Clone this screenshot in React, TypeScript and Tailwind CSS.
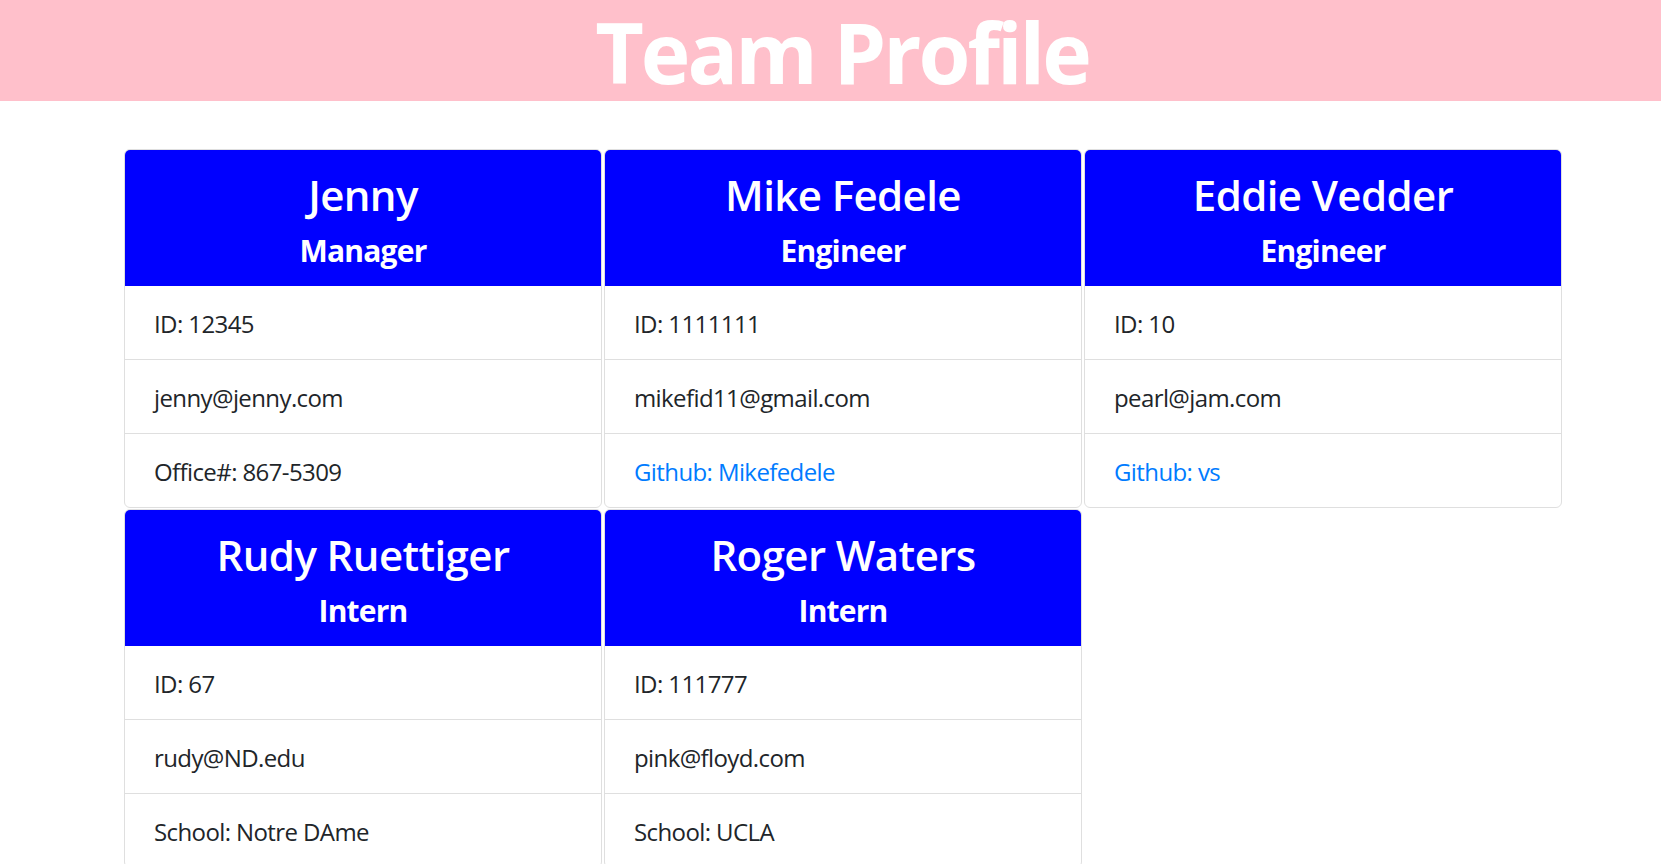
import React from "react";

interface Member {
  id: string;
  name: string;
  role: string;
  email: string;
  extra: string;
  link?: boolean;
}

const team: Member[] = [
  { id: "12345", name: "Jenny", role: "Manager", email: "jenny@jenny.com", extra: "Office#: 867-5309" },
  { id: "1111111", name: "Mike Fedele", role: "Engineer", email: "mikefid11@gmail.com", extra: "Github: Mikefedele", link: true },
  { id: "10", name: "Eddie Vedder", role: "Engineer", email: "pearl@jam.com", extra: "Github: vs", link: true },
  { id: "67", name: "Rudy Ruettiger", role: "Intern", email: "rudy@ND.edu", extra: "School: Notre DAme" },
  { id: "111777", name: "Roger Waters", role: "Intern", email: "pink@floyd.com", extra: "School: UCLA" },
];

const MemberCard = ({ member }: { member: Member }) => {
  return (
    <div className="flex flex-col rounded-[6px] border border-[#dfdfdf] bg-white overflow-hidden">
      <div className="bg-[#0000ff] text-white text-center px-[30px] pt-[20px] pb-[17px]">
        <h3 className="text-[42px] leading-[50px] font-semibold tracking-[-0.6px] mb-[13px]">{member.name}</h3>
        <h5 className="text-[30px] leading-[36px] font-bold tracking-[-0.8px]">{member.role}</h5>
      </div>
      <ul className="flex flex-col text-[24px] leading-[36px] tracking-[-0.6px] text-[#212529]">
        <li className="px-[29px] pt-[20px] pb-[17px]">ID: {member.id}</li>
        <li className="px-[29px] pt-[20px] pb-[17px] border-t border-[#dfdfdf]">{member.email}</li>
        <li className="px-[29px] pt-[20px] pb-[17px] border-t border-[#dfdfdf]">
          {member.link ? <a className="text-[#007bff]">{member.extra}</a> : member.extra}
        </li>
      </ul>
    </div>
  );
};

export default function App() {
  return (
    <div className="min-h-screen bg-white font-['Open_Sans',sans-serif]">
      <header className="bg-[#ffc0cb] h-[101px] flex justify-center pl-[23px]">
        <h1 className="text-[84px] leading-[98px] pt-[3px] font-bold text-white tracking-[-3px]">Team Profile</h1>
      </header>
      <main className="pl-[124px] pt-[48px]">
        <div className="grid grid-cols-[repeat(3,478px)] gap-x-[2px] gap-y-[1px]">
          {team.map((m) => (
            <MemberCard member={m} key={m.id} />
          ))}
        </div>
      </main>
    </div>
  );
}
